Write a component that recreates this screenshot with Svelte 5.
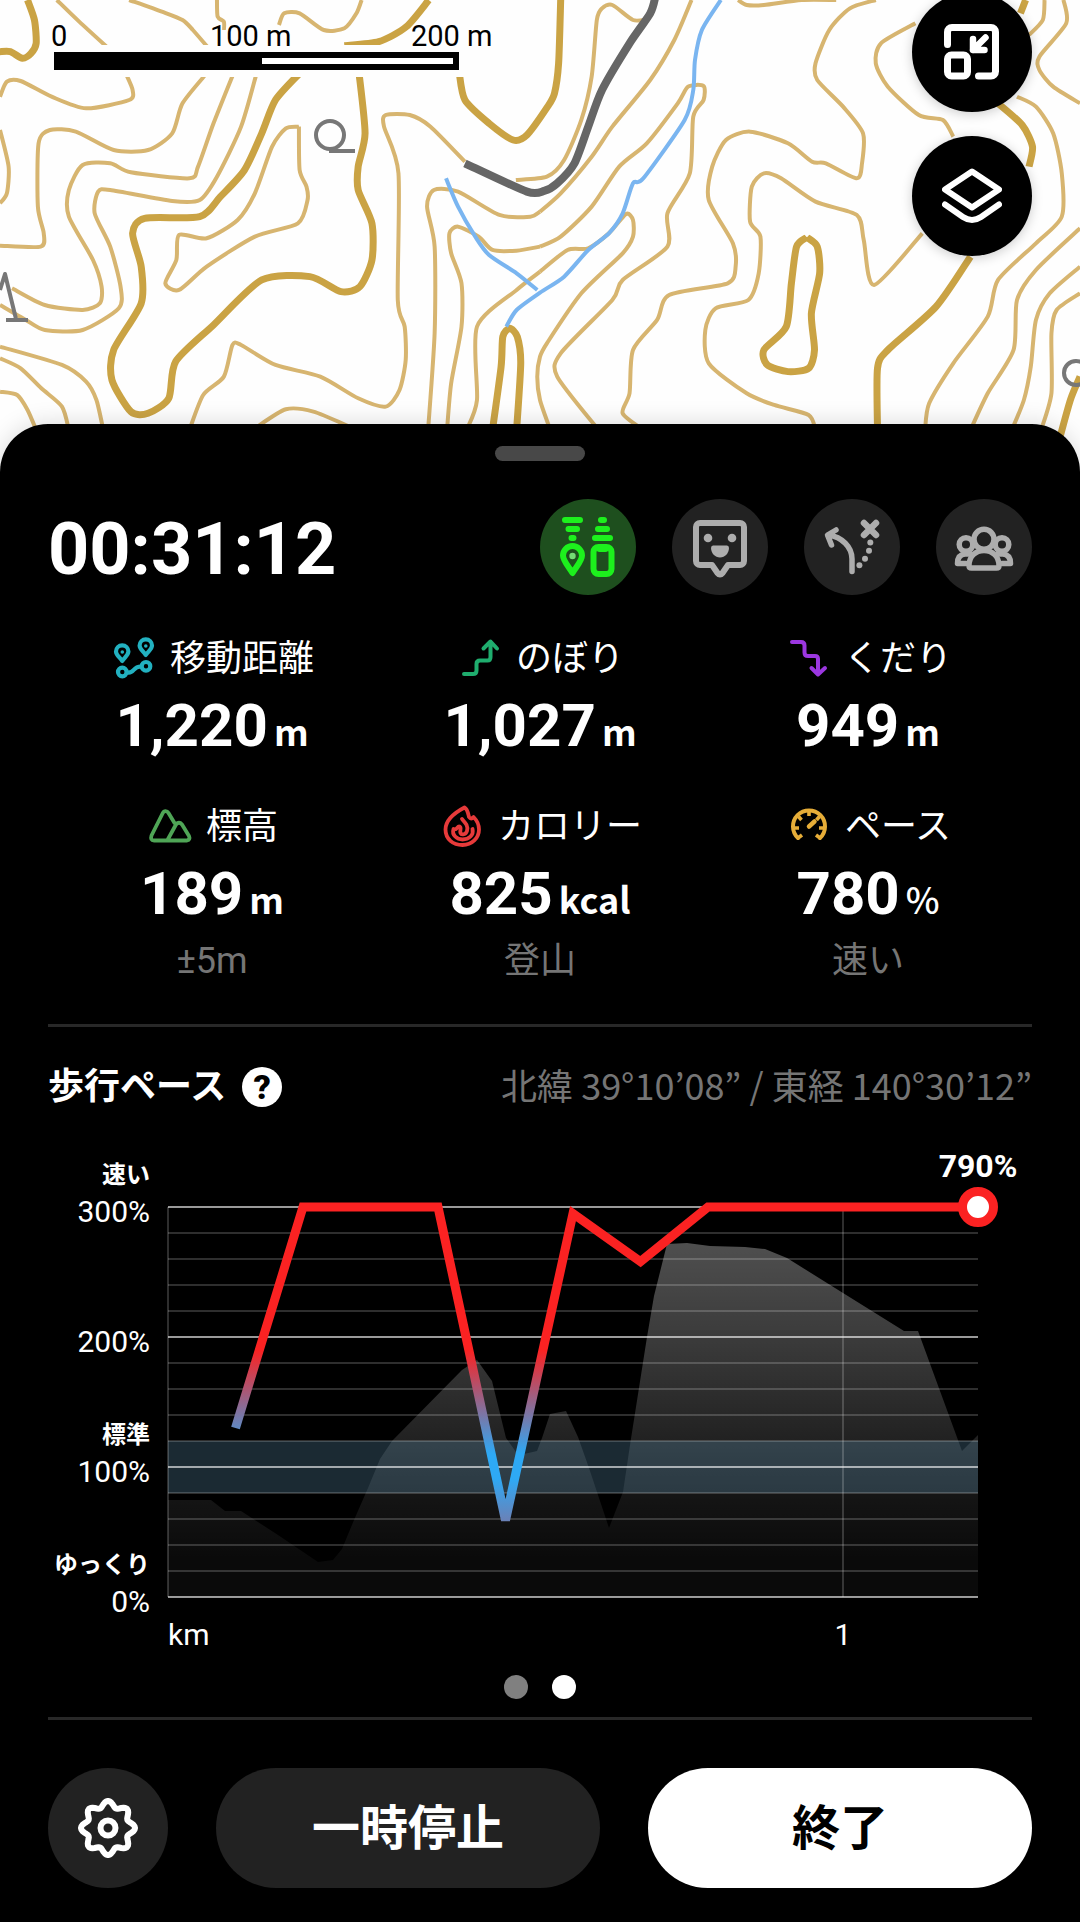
<script lang="ts">
  type Point = [number, number];

  const stats = [
    { icon: "distance", label: "移動距離", value: "1,220", unit: "m", note: "" },
    { icon: "climb", label: "のぼり", value: "1,027", unit: "m", note: "" },
    { icon: "descent", label: "くだり", value: "949", unit: "m", note: "" },
    { icon: "altitude", label: "標高", value: "189", unit: "m", note: "±5m" },
    { icon: "calorie", label: "カロリー", value: "825", unit: "kcal", note: "登山" },
    { icon: "pace", label: "ペース", value: "780", unit: "%", note: "速い" },
  ];

  // Chart plot area inside the svg
  const left = 120;
  const top = 67;
  const width = 810;
  const height = 390;
  const maxKm = 1.2;
  const maxPace = 300;

  const px = (km: number) => left + (km / maxKm) * width;
  const py = (pace: number) => top + height - (pace / maxPace) * height;

  const gridLines = Array.from({ length: 16 }, (_, i) => i * 20);

  const yLabels = [
    { pace: 300, name: "速い" },
    { pace: 200, name: "" },
    { pace: 100, name: "標準" },
    { pace: 0, name: "ゆっくり" },
  ];

  const pace: Point[] = [
    [0.1, 130], [0.2, 300], [0.4, 300], [0.5, 59],
    [0.6, 295], [0.7, 258], [0.8, 300], [1.2, 300],
  ];

  // Elevation profile, relative to the top left of the plot
  const elevation: Point[] = [
    [0, 293], [43, 293], [57, 304], [73, 304], [110, 328], [150, 355], [165, 353],
    [174, 342], [186, 313], [200, 281], [212, 252], [224, 234], [294, 163], [309, 153],
    [324, 174], [338, 231], [348, 245], [356, 247], [369, 244], [374, 231], [382, 207],
    [398, 204], [410, 230], [421, 261], [441, 321], [455, 285], [462, 238], [479, 130],
    [486, 89], [499, 37], [519, 36], [542, 39], [577, 40], [597, 42], [619, 51],
    [675, 86], [736, 124], [750, 124], [794, 244], [810, 228],
  ];

  const paceLine = pace.map(([km, p]) => `${px(km)},${py(p)}`).join(" ");
  const elevationArea =
    elevation.map(([x, y]) => `${left + x},${top + y}`).join(" ") +
    ` ${left + width},${top + height} ${left},${top + height}`;

  const gear = Array.from({ length: 96 }, (_, i) => {
    const a = (i / 96) * Math.PI * 2;
    const r = 24 + 3 * Math.cos(a * 8);
    return `${(30 + r * Math.sin(a)).toFixed(2)},${(30 - r * Math.cos(a)).toFixed(2)}`;
  }).join(" ");

  // Turns a list of points into a smooth path
  function smooth(list: string) {
    const p = list.split(" ").map((s) => s.split(",").map(Number));
    let d = `M${p[0][0]} ${p[0][1]}`;
    for (let i = 0; i < p.length - 1; i++) {
      const a = p[i - 1] ?? p[i];
      const b = p[i];
      const c = p[i + 1];
      const e = p[i + 2] ?? c;
      const k = 8;
      d += `C${b[0] + (c[0] - a[0]) / k} ${b[1] + (c[1] - a[1]) / k} ${c[0] - (e[0] - b[0]) / k} ${c[1] - (e[1] - b[1]) / k} ${c[0]} ${c[1]}`;
    }
    return d;
  }

  const tiles = [
    {
      x: 0,
      thin: [
        "165,0 230,65 320,150",
        "375,0 470,35 530,60 560,90 610,150",
        "630,0 632,50 650,65 650,90",
        "810,75 825,40 870,40 940,90 1000,85 1035,40 1050,0",
        "0,290 20,245 60,243 150,290 250,325 375,300 385,270 365,220",
        "0,390 25,500 20,580 0,610",
        "0,737 118,740 127,700 110,620 112,430 145,390 220,395 330,450 430,450 500,400 530,310 600,220",
        "35,865 130,915 240,930 290,910 295,860 270,780 200,650 200,570 240,495 320,490 380,517 550,535 575,500 620,370 680,215",
        "0,915 75,960 130,990 240,990 345,925 350,860 320,740 275,640 285,575 320,570 500,603 580,600 630,530 700,380 745,220",
        "868,380 830,385 790,440 740,580 690,660 600,715 520,705 512,780 480,850 520,870 600,800 740,710 865,670 893,600 890,560 870,510 868,380",
        "0,1040 180,1095 250,1145 280,1200 300,1290",
        "0,1075 60,1105 120,1165 180,1220 200,1290",
        "0,1175 50,1185 80,1230 105,1290",
        "550,1290 590,1185 650,1130 675,1035 700,1035 800,1095 930,1130 1040,1195 1120,1220 1160,1170 1178,1080 1175,980 1155,900 1157,520 1115,380 1120,345 1190,345 1250,380 1350,485",
        "740,1285 830,1228 910,1235 1015,1280",
        "1243,1290 1262,1000 1262,740 1240,620 1260,570 1330,575 1450,645 1540,650 1568,635",
        "1298,1290 1310,1150 1340,980 1340,850 1310,760 1305,700 1330,680 1390,710 1430,750 1500,752 1568,740",
        "1355,1290 1385,1200 1385,980 1500,870 1568,815",
      ],
      thick: [
        "80,0 100,60 105,130 90,160 65,175 30,155 0,155",
        "1245,0 1180,80 1100,125 1000,137",
        "870,220 800,300 760,400 710,510 640,590 580,650 420,655 385,700 410,800 410,910 330,1050 325,1140 380,1235 430,1240 490,1195 510,1085 620,975 760,840 900,830 990,875 1045,860 1080,780 1080,670 1040,570 1040,500 1060,400 1042,215",
        "1333,215 1350,300 1420,370 1490,420 1530,405 1590,320 1610,280 1622,190 1628,0",
        "1430,1290 1455,1100 1460,1010 1480,985 1502,1010 1512,1090 1500,1290",
      ],
    },
    {
      x: 540,
      thin: [
        "310,58 270,60 210,15 180,25 165,60 150,230 120,360 70,480 20,530 -70,540",
        "440,0 390,120 320,240 210,380 150,470 60,580 0,635",
        "0,740 60,710 150,620 230,500 310,430 400,310 430,260 475,258 475,300 445,350 435,520 370,640 370,740 240,840 210,900 60,1060 50,1130 170,1290",
        "0,815 80,750 140,745 200,700 250,642 270,660 270,710 240,760 120,880 20,1030 0,1070 -8,1130 0,1200 30,1290",
        "575,0 600,15 650,15 760,0 860,0",
        "975,0 900,25 840,90 800,190 805,240 880,320 938,400 935,490 920,535 830,490 790,485 720,430 610,395 540,420 500,500 490,600 560,730 568,800 545,850 375,885 340,960 270,1050 260,1180 240,1240 300,1290",
        "800,1290 780,1245 680,1215 600,1180 490,1090 480,990 510,925 605,900 635,820 640,710 610,665 615,560 650,520 700,535 800,605 920,645 940,720 970,855 1110,700",
        "1090,70 990,130 975,190 1010,260 1100,345 1170,360 1200,410",
        "1465,0 1460,60 1420,105",
        "1520,0 1528,70 1450,170 1450,210 1490,260 1568,310",
        "1385,290 1440,320 1490,400 1515,520 1515,650 1440,730 1330,840 1300,950 1200,1090 1130,1210 1118,1290",
        "1568,685 1440,810 1385,900 1375,1050 1300,1180 1250,1290",
        "1568,800 1480,880 1440,960 1425,1100 1405,1200 1370,1290",
        "1568,880 1500,930 1485,1000 1485,1180 1455,1290",
      ],
      thick: [
        "775,712 745,740 730,850 715,980 650,1050 660,1095 720,1115 780,1105 797,1050 788,940 812,820 805,740 775,712",
        "980,1290 980,1105 1010,1050 1150,920 1250,770",
        "1410,0 1395,40",
        "1330,310 1400,375 1430,440 1420,500",
        "1568,1130 1540,1200 1505,1330",
      ],
    },
  ];

  const rivers = [
    "2093,0 2038,90 2018,180 2013,270 1988,360 1868,535 1838,550 1808,640 1768,700 1708,750 1638,830 1568,878 1500,930 1470,980",
    "1295,535 1330,620 1380,710 1420,765 1500,820 1560,870",
  ];
  const road = "1350,490 1530,575 1580,573 1618,550 1668,490 1708,380 1748,270 1828,130 1888,40 1903,-10";
</script>

<svelte:head>
  <title>活動記録</title>
</svelte:head>

<main class="screen">
  <section class="map" aria-label="地図">
    <svg class="terrain" viewBox="0 0 1080 472" preserveAspectRatio="xMidYMin slice" aria-hidden="true">
      {#each tiles as tile}
        <g transform="translate({tile.x} 0) scale(0.3444 0.3333)">
          {#each tile.thin as line}
            <path class="contour" d={smooth(line)} />
          {/each}
          {#each tile.thick as line}
            <path class="contour index" d={smooth(line)} />
          {/each}
        </g>
      {/each}
      <g transform="scale(0.3444 0.3333)">
        {#each rivers as line}
          <path class="river" d={smooth(line)} />
        {/each}
        <path class="road" d={smooth(road)} />
      </g>
      <g class="symbol">
        <circle cx="330" cy="135" r="14" />
        <path d="M329 151h26M0 290l5-16 11 45M6 320h22" />
        <circle cx="1076" cy="373" r="12" />
      </g>
    </svg>

    <div class="scale">
      <div class="scale-labels"><span>0</span><span>100 m</span><span>200 m</span></div>
      <div class="scale-box"><div class="scale-bar"><i></i></div></div>
    </div>

    <div class="map-buttons">
      <button type="button" aria-label="地図を縮小">
        <svg width="56" height="56" viewBox="0 0 56 56">
          <g fill="none" stroke="#fff" stroke-width="7" stroke-linecap="round" stroke-linejoin="round">
            <path d="M3.5 20.5V8A4.5 4.5 0 0 1 8 3.5H47A4.5 4.5 0 0 1 51.5 8V47.5A4.5 4.5 0 0 1 47 52H34.5" />
            <rect x="3.5" y="31" width="20" height="21" rx="4" />
            <path stroke-width="6.5" d="M41.5 13.5L29 26M29 15V26H40.5" />
          </g>
        </svg>
      </button>
      <button type="button" aria-label="レイヤー">
        <svg width="60" height="56" viewBox="0 0 60 56">
          <g fill="none" stroke="#fff" stroke-width="6" stroke-linecap="round" stroke-linejoin="round">
            <path d="M30 3.5L57 21.5L30 39.5L3 21.5Z" />
            <path d="M3 36.5L21 49Q30 55 39 49L57 36.5" />
          </g>
        </svg>
      </button>
    </div>
  </section>

  <section class="sheet">
    <div class="handle"></div>

    <header>
      <h1>00:31:12</h1>
      <nav>
        <button type="button" class="active" aria-label="持ち物と地点">
          <svg viewBox="0 0 96 96">
            <g fill="none" stroke="#1df01d" stroke-width="6" stroke-linecap="round" stroke-linejoin="round">
              <path d="M25 21H40M28.5 30H37M31.5 39H33.5M61 21H64M58 30H67M55 39H70" />
              <path d="M32.5 74C29 68 23 62 23 56.5a9.5 9.5 0 0 1 19 0C42 62 36 68 32.5 74Z" />
              <rect x="53.5" y="48" width="18" height="27" rx="5" />
              <path d="M59.5 50H65.5" />
            </g>
            <circle cx="32.5" cy="57" r="3.2" fill="#74dc74" />
          </svg>
        </button>
        <button type="button" aria-label="フィールドメモ">
          <svg viewBox="0 0 96 96">
            <path fill="none" stroke="#adadad" stroke-width="6" stroke-linejoin="round" d="M28 24H68A4 4 0 0 1 72 28V62A4 4 0 0 1 68 66H56L50.5 74Q48 77 45.5 74L40 66H28A4 4 0 0 1 24 62V28A4 4 0 0 1 28 24Z" />
            <g fill="#adadad">
              <circle cx="36" cy="39" r="4.3" />
              <circle cx="60" cy="39" r="4.3" />
              <path d="M41 46.5H55Q57 46.5 57 49C57 54 53 58.5 48 58.5S39 54 39 49Q39 46.5 41 46.5Z" />
            </g>
          </svg>
        </button>
        <button type="button" aria-label="ルート">
          <svg viewBox="0 0 96 96">
            <g fill="none" stroke="#adadad" stroke-width="5.5" stroke-linecap="round" stroke-linejoin="round">
              <path d="M48 72.5V60C48 48 38 38 24.5 36M32 31L23.5 36L27.5 46" />
              <path stroke-width="6.5" d="M60 24L72 36M72 24L60 36" />
            </g>
            <g fill="#adadad">
              <circle cx="66.3" cy="43.5" r="3" />
              <circle cx="65" cy="51.7" r="3" />
              <circle cx="61" cy="59.7" r="3" />
              <circle cx="55.4" cy="66.3" r="3" />
            </g>
          </svg>
        </button>
        <button type="button" aria-label="メンバー">
          <svg viewBox="0 0 96 96">
            <g fill="none" stroke="#adadad" stroke-width="5.5" stroke-linecap="round" stroke-linejoin="round">
              <circle cx="48" cy="40.3" r="10" />
              <circle cx="30" cy="45.5" r="6.8" />
              <circle cx="66" cy="45.5" r="6.8" />
              <path d="M30 64.5H21.5C21.5 59 24 55.5 29 55H34" />
              <path d="M66 64.5H74.5C74.5 59 72 55.5 67 55H62" />
              <path fill="#222" d="M33 66.5C33 57.5 39.5 51.5 48 51.5S63 57.5 63 66.5Q63 69 60.5 69H35.5Q33 69 33 66.5Z" />
            </g>
          </svg>
        </button>
      </nav>
    </header>

    <div class="stats">
      {#each stats as stat}
        <div class="stat">
          <div class="stat-label">
            <svg viewBox="0 0 48 48" fill="none" stroke-linecap="round" stroke-linejoin="round" aria-hidden="true">
              {#if stat.icon === "distance"}
                <g stroke="#22b1c0" stroke-width="4.2">
                  <path d="M12.3 28C10 24.5 6 22 6 18.5a6.2 6.2 0 0 1 12.4 0C18.4 22 14.5 24.5 12.3 28Z" />
                  <path d="M35.8 22C33.5 18.5 29.6 16 29.6 12.5a6.2 6.2 0 0 1 12.4 0C42 16 38 18.5 35.8 22Z" />
                  <circle cx="12.3" cy="39" r="4.3" />
                  <circle cx="36" cy="33.3" r="4.3" />
                  <path d="M17.5 39.5C25 40.5 22 33.5 31 33.5" />
                </g>
                <circle cx="12.3" cy="19" r="1.8" fill="#22b1c0" />
                <circle cx="35.8" cy="13" r="1.8" fill="#22b1c0" />
              {:else if stat.icon === "climb"}
                <path stroke="#1fad6e" stroke-width="4" d="M8 41H17Q20.5 41 20.5 37.5V31Q20.5 27.5 24 27.5H31.5Q34.5 27.5 34.5 24V9M27.5 15.5L34.5 8.5L41 15.5" />
              {:else if stat.icon === "descent"}
                <path stroke="#9b37e0" stroke-width="4" d="M8 9H17Q20.5 9 20.5 12.5V19.5Q20.5 23 24 23H31Q34 23 34 26V41M27.5 35L34 41.5L41 35" />
              {:else if stat.icon === "altitude"}
                <path stroke="#4fa556" stroke-width="3.8" d="M28.5 22L22.5 12C21 9.5 18 9.5 16.8 12L5.5 34.5Q4 39.5 8 39.5H41Q44.5 38.5 43 35L36 23.5Q33 20 30 23.5L21.5 39" />
              {:else if stat.icon === "calorie"}
                <g stroke="#e63a3a" stroke-width="3.8">
                  <path d="M26.5 6.5C18 11 7.5 18 7.5 28.5C7.5 38 15 44 24.5 44S41 37 41 28.5C41 23.5 39 19.5 35.5 16Q33 19 31 16C30 12 29.5 8 26.5 6.5Z" />
                  <path d="M24 18C27.5 22 30.5 25 29 30C28 33.5 23.5 34.5 22.5 32C21.5 29 24 27 21.5 25.5C19 25 19 30 15.5 28C13.5 34 19 38.5 24.5 38.5C31 38.5 36 34 34.5 28" />
                </g>
              {:else}
                <g stroke="#e6ad38">
                  <path stroke-width="4" d="M13 37A16 16 0 1 1 35 37" />
                  <path stroke-width="3.6" stroke-linecap="butt" d="M24 10V15M13.5 15.5L16.5 19M34.5 15.5L31.5 19M9 27H14M39 27H34M13 37L17 34M35 37L31 34" />
                  <path stroke-width="4.5" d="M24 25.5L29.5 20.5" />
                </g>
              {/if}
            </svg>
            <span>{stat.label}</span>
          </div>
          <div class="stat-value"><strong>{stat.value}</strong><span class:light={stat.unit === "%"}>{stat.unit}</span></div>
          {#if stat.note}
            <div class="stat-note">{stat.note}</div>
          {/if}
        </div>
      {/each}
    </div>

    <hr />

    <div class="chart-head">
      <h2>歩行ペース</h2>
      <button type="button" class="help" aria-label="歩行ペースについて">?</button>
      <p>北緯 39°10’08” / 東経 140°30’12”</p>
    </div>

    <svg class="chart" viewBox="0 0 984 512" role="img" aria-label="歩行ペースのグラフ">
      <defs>
        <linearGradient id="hill" gradientUnits="userSpaceOnUse" x1="0" y1={top} x2="0" y2={top + height}>
          <stop offset="0.09" stop-color="#fff" stop-opacity="0.31" />
          <stop offset="0.34" stop-color="#fff" stop-opacity="0.23" />
          <stop offset="0.6" stop-color="#fff" stop-opacity="0.13" />
          <stop offset="0.75" stop-color="#fff" stop-opacity="0.08" />
          <stop offset="0.9" stop-color="#fff" stop-opacity="0.04" />
        </linearGradient>
        <linearGradient id="speed" gradientUnits="userSpaceOnUse" x1="0" y1={py(190)} x2="0" y2={py(-20)}>
          <stop offset="0" stop-color="#fb2222" />
          <stop offset="0.38" stop-color="#2ea9f5" />
          <stop offset="0.47" stop-color="#2ea9f5" />
          <stop offset="1" stop-color="#fb2222" />
        </linearGradient>
      </defs>

      <polygon points={elevationArea} fill="url(#hill)" />
      <rect class="standard" x={left} y={py(120)} width={width} height={py(80) - py(120)} />
      {#each gridLines as value}
        <line class="grid" class:major={value % 100 === 0} x1={left} x2={left + width} y1={py(value)} y2={py(value)} />
      {/each}
      <line class="grid" x1={left} x2={left} y1={top} y2={top + height} />
      <line class="grid" x1={px(1)} x2={px(1)} y1={top} y2={top + height} />

      {#each yLabels as label}
        <text x="102" y={py(label.pace) + 15} text-anchor="end">{label.pace}%</text>
        {#if label.name}
          <text class="zone" x="102" y={py(label.pace) - 24} text-anchor="end">{label.name}</text>
        {/if}
      {/each}
      <text x={left} y="505">km</text>
      <text x={px(1)} y="505" text-anchor="middle">1</text>

      <polyline class="pace" points={paceLine} />
      <circle cx={px(1.2)} cy={py(300)} r="15.5" fill="#fff" stroke="#fb2222" stroke-width="9" />
      <text class="current" x={px(1.2)} y="37" text-anchor="middle">790%</text>
    </svg>

    <div class="pager">
      <button type="button" aria-label="1ページ目"></button>
      <button type="button" class="current" aria-label="2ページ目" aria-current="true"></button>
    </div>

    <hr />

    <footer>
      <button type="button" class="settings" aria-label="設定">
        <svg width="60" height="60" viewBox="0 0 60 60" fill="none" stroke="#fff" stroke-width="6" stroke-linejoin="round">
          <polygon points={gear} />
          <circle cx="30" cy="30" r="7.5" />
        </svg>
      </button>
      <button type="button" class="wide">一時停止</button>
      <button type="button" class="wide finish">終了</button>
    </footer>
  </section>
</main>

<style>
  :global(body) {
    margin: 0;
    background: #000;
  }

  .screen {
    font-family: Roboto, "Noto Sans CJK JP", sans-serif;
    color: #fff;
  }

  button {
    display: flex;
    align-items: center;
    justify-content: center;
    padding: 0;
    border: none;
    font-family: inherit;
    cursor: pointer;
  }

  /* map */
  .map {
    position: relative;
    height: 472px;
    overflow: hidden;
    background: #fefefe;
  }

  .terrain {
    position: absolute;
    inset: 0;
    width: 100%;
    height: 100%;
  }

  .terrain path {
    fill: none;
    stroke-linejoin: round;
    vector-effect: non-scaling-stroke;
  }

  .terrain .contour {
    stroke: #d7b570;
    stroke-width: 4px;
  }

  .terrain .contour.index {
    stroke: #caa344;
    stroke-width: 7px;
  }

  .terrain .river {
    stroke: #7ab5f0;
    stroke-width: 4px;
  }

  .terrain .road {
    stroke: #666;
    stroke-width: 8px;
  }

  .symbol {
    fill: none;
    stroke: #777;
    stroke-width: 4px;
  }

  .scale {
    position: relative;
    padding: 20px 0 0 48px;
    color: #000;
  }

  .scale-labels {
    display: grid;
    grid-template-columns: 159px 201px auto;
    justify-content: start;
    padding-left: 3px;
    font-size: 29px;
    line-height: 32px;
    text-shadow: 0 0 3px #fff, 0 0 3px #fff;
  }

  .scale-box {
    width: 405px;
    margin-top: -7px;
    padding: 7px 6px;
    background: #fefefe;
  }

  .scale-bar {
    display: flex;
    justify-content: flex-end;
    padding: 6px;
    background: #000;
  }

  .scale-bar i {
    width: 191px;
    height: 6px;
    background: #fff;
  }

  .map-buttons {
    position: absolute;
    top: -8px;
    right: 48px;
    display: flex;
    flex-direction: column;
    gap: 24px;
  }

  .map-buttons button {
    width: 120px;
    height: 120px;
    border-radius: 50%;
    background: #000;
    box-shadow: 0 2px 12px rgba(0, 0, 0, 0.2);
  }

  /* sheet */
  .sheet {
    position: relative;
    margin-top: -48px;
    padding: 22px 48px 34px;
    border-radius: 48px 48px 0 0;
    background: #000;
    box-shadow: 0 0 24px rgba(0, 0, 0, 0.15);
  }

  .handle {
    width: 90px;
    height: 15px;
    margin: 0 auto 38px;
    border-radius: 8px;
    background: #484848;
  }

  header {
    display: flex;
    align-items: center;
    justify-content: space-between;
  }

  h1 {
    margin: 0;
    padding-top: 6px;
    font-size: 72px;
    font-weight: 700;
    line-height: 90px;
  }

  nav {
    display: flex;
    gap: 36px;
  }

  nav button {
    width: 96px;
    height: 96px;
    border-radius: 50%;
    background: #222;
  }

  nav button.active {
    background: #1e4f1e;
  }

  nav svg {
    width: 96px;
    height: 96px;
  }

  .stats {
    display: grid;
    grid-template-columns: repeat(3, 1fr);
    row-gap: 39px;
    margin: 38px 0 39px;
  }

  .stat-label {
    display: flex;
    align-items: center;
    justify-content: center;
    gap: 12px;
    font-size: 36px;
  }

  .stat-label span {
    padding-top: 4px;
    line-height: 44px;
  }

  .stat-label svg {
    width: 48px;
    height: 48px;
  }

  .stat-value {
    display: flex;
    align-items: baseline;
    justify-content: center;
    gap: 6px;
    margin-top: 9px;
    line-height: 72px;
  }

  .stat-value strong {
    font-size: 60px;
    font-weight: 700;
  }

  .stat-value span {
    font-family: "Noto Sans CJK JP", sans-serif;
    font-size: 36px;
    font-weight: 700;
    line-height: 36px;
  }

  .stat-value span.light {
    font-weight: 500;
  }

  .stat-note {
    padding-top: 8px;
    color: #757575;
    font-size: 36px;
    line-height: 47px;
    text-align: center;
  }

  hr {
    height: 3px;
    margin: 0;
    border: none;
    background: #282828;
  }

  .chart-head {
    display: flex;
    align-items: center;
    margin: 36px 0 29px;
    font-size: 36px;
    line-height: 48px;
  }

  h2 {
    margin: 0 16px 0 0;
    font-size: 36px;
    font-weight: 700;
  }

  .help {
    width: 40px;
    height: 40px;
    border-radius: 50%;
    background: #fff;
    color: #000;
    font-size: 34px;
    font-weight: 900;
    line-height: 40px;
  }

  .chart-head p {
    margin: 0 0 0 auto;
    padding-bottom: 6px;
    color: #757575;
    font-family: "Noto Sans CJK JP", sans-serif;
    line-height: 42px;
  }

  .chart {
    display: block;
    width: 100%;
  }

  .chart text {
    fill: #fff;
    font-size: 30px;
  }

  .chart .zone {
    font-size: 24px;
    font-weight: 700;
  }

  .chart .current {
    font-size: 32px;
    font-weight: 700;
  }

  .standard {
    fill: rgba(108, 168, 204, 0.25);
  }

  .grid {
    stroke: rgba(255, 255, 255, 0.18);
    stroke-width: 2px;
  }

  .grid.major {
    stroke: rgba(255, 255, 255, 0.6);
  }

  .pace {
    fill: none;
    stroke: url(#speed);
    stroke-width: 9px;
  }

  .pager {
    display: flex;
    justify-content: center;
    gap: 24px;
    margin: 23px 0 18px;
  }

  .pager button {
    width: 24px;
    height: 24px;
    border-radius: 50%;
    background: #808080;
  }

  .pager .current {
    background: #fff;
  }

  footer {
    display: flex;
    gap: 48px;
    margin-top: 48px;
  }

  footer button {
    height: 120px;
    border-radius: 60px;
    background: #222;
    color: #fff;
    font-size: 48px;
    font-weight: 700;
  }

  .settings {
    flex: none;
    width: 120px;
  }

  .wide {
    flex: 1;
    padding-bottom: 8px;
  }

  .finish {
    background: #fff;
    color: #000;
  }
</style>
